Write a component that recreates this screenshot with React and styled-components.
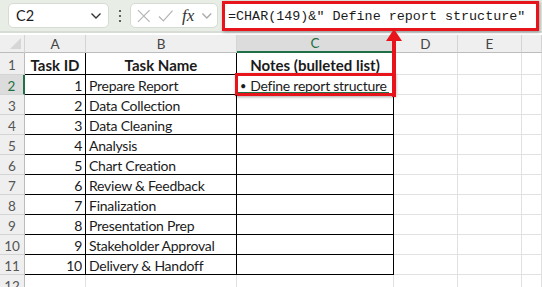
import React from "react";
import styled, { createGlobalStyle } from "styled-components";

const GlobalStyle = createGlobalStyle`
  html, body {
    margin: 0;
    padding: 0;
    background: #ffffff;
    overflow: hidden;
  }
  body {
    font-family: Lato, "Liberation Sans", sans-serif;
  }
`;

const Page = styled.div`
  position: relative;
  width: 542px;
  height: 287px;
  overflow: hidden;
  background: #ffffff;
`;

const Toolbar = styled.div`
  height: 33px;
  box-sizing: border-box;
  background: #e8eee6;
  border-bottom: 2px solid #d8dcd7;
  display: flex;
  align-items: flex-start;
  padding: 3px 0 0 8px;
`;

const NameBox = styled.div`
  width: 101px;
  height: 25px;
  box-sizing: border-box;
  background: #ffffff;
  border: 1px solid #d6dbd4;
  border-radius: 5px;
  display: flex;
  align-items: center;
  justify-content: space-between;
  padding: 0 6px 0 7px;
  font-size: 14.5px;
  color: #1b1b1b;
`;

const Dots = styled.div`
  width: 21px;
  display: flex;
  flex-direction: column;
  align-items: center;
  justify-content: center;
  gap: 3px;
  height: 25px;
  span {
    width: 2px;
    height: 2px;
    background: #333;
    border-radius: 1px;
  }
`;

const FxBox = styled.div`
  width: 88px;
  height: 25px;
  box-sizing: border-box;
  background: #ffffff;
  border: 1px solid #d6dbd4;
  border-radius: 5px;
  display: flex;
  align-items: center;
  padding: 0 4px 0 6px;
  gap: 7px;
`;

const Fx = styled.span`
  font-family: "Liberation Serif", serif;
  font-style: italic;
  font-size: 17px;
  color: #333;
  margin-left: 2px;
`;

const FormulaBox = styled.div`
  margin-left: 4px;
  margin-top: -2px;
  width: 317px;
  height: 30px;
  box-sizing: border-box;
  background: #ffffff;
  border: 3px solid #e8141b;
  box-shadow: 1px 1px 3px rgba(0, 0, 0, 0.35);
  display: flex;
  align-items: center;
  padding-left: 3px;
  font-family: "Liberation Mono", "DejaVu Sans Mono", monospace;
  font-size: 13.4px;
  color: #1b1b1b;
  white-space: pre;
`;

const Sheet = styled.div`
  display: grid;
  grid-template-columns: 25px 61px 151px 157px 64px 64px 20px;
  grid-template-rows: 18px 22px repeat(11, 20px);
  margin-top: 2px;
  color: #1b1b1b;
`;

const ColHead = styled.div`
  box-sizing: border-box;
  background: ${(p) => (p.$active ? "#dcdcdc" : "#efefef")};
  border-right: 1px solid #d4d4d4;
  border-bottom: ${(p) => (p.$active ? "2px solid #1f7145" : "1px solid #bcbcbc")};
  color: ${(p) => (p.$active ? "#1f7145" : "#444")};
  font-size: 13.5px;
  display: flex;
  align-items: center;
  justify-content: center;
`;

const Corner = styled(ColHead)`
  position: relative;
  &::after {
    content: "";
    position: absolute;
    right: 3px;
    bottom: 3px;
    border-left: 11px solid transparent;
    border-bottom: 11px solid #d6d6d6;
  }
`;

const RowHead = styled.div`
  box-sizing: border-box;
  background: ${(p) => (p.$active ? "#dcdcdc" : "#efefef")};
  border-bottom: 1px solid #d4d4d4;
  border-right: ${(p) => (p.$active ? "2px solid #1f7145" : "1px solid #bcbcbc")};
  color: ${(p) => (p.$active ? "#1f7145" : "#555")};
  font-size: 13.5px;
  display: flex;
  align-items: center;
  justify-content: center;
  padding-top: 2px;
`;

const Cell = styled.div`
  position: relative;
  box-sizing: border-box;
  border-right: 1px solid ${(p) => (p.$boxed ? "#000" : "#e1e1e1")};
  border-bottom: 1px solid ${(p) => (p.$boxed ? "#000" : "#e1e1e1")};
  display: flex;
  align-items: center;
  justify-content: ${(p) => (p.$align === "right" ? "flex-end" : p.$align === "center" ? "center" : "flex-start")};
  padding: 2px 3px 0;
  font-weight: ${(p) => (p.$bold ? 700 : 400)};
  font-size: ${(p) => (p.$bold ? "15px" : "14px")};
  letter-spacing: ${(p) => (p.$bold ? "0" : "-0.25px")};
  white-space: nowrap;
`;

const Bullet = styled.span`
  font-size: 11px;
  margin-right: 4px;
`;

const Selected = styled.div`
  position: absolute;
  left: -2px;
  top: -2px;
  right: -2px;
  bottom: -2px;
  border: 3px solid #e8141b;
  box-shadow: 1px 1px 3px rgba(0, 0, 0, 0.35);
  pointer-events: none;
  &::after {
    content: "";
    position: absolute;
    left: 0;
    right: 3px;
    bottom: 0;
    height: 1px;
    background: #1f7145;
  }
`;

const Arrow = styled.svg`
  position: absolute;
  left: 384px;
  top: 29px;
`;

const tasks = [
  "Prepare Report",
  "Data Collection",
  "Data Cleaning",
  "Analysis",
  "Chart Creation",
  "Review & Feedback",
  "Finalization",
  "Presentation Prep",
  "Stakeholder Approval",
  "Delivery & Handoff",
];

const Chevron = ({ color = "#333" }) => (
  <svg width="12" height="8" viewBox="0 0 12 8">
    <path d="M1.5 1.5 L6 6 L10.5 1.5" fill="none" stroke={color} strokeWidth="1.4" />
  </svg>
);

const App = () => {
  const rows = [];
  rows.push(
    <React.Fragment key="r1">
      <RowHead>1</RowHead>
      <Cell $boxed $bold $align="center">Task ID</Cell>
      <Cell $boxed $bold $align="center">Task Name</Cell>
      <Cell $boxed $bold $align="center">Notes (bulleted list)</Cell>
      <Cell />
      <Cell />
      <Cell />
    </React.Fragment>
  );
  tasks.forEach((t, i) => {
    const r = i + 2;
    rows.push(
      <React.Fragment key={r}>
        <RowHead $active={r === 2}>{r}</RowHead>
        <Cell $boxed $align="right">{i + 1}</Cell>
        <Cell $boxed>{t}</Cell>
        <Cell $boxed>
          {r === 2 && (
            <>
              <Bullet>•</Bullet>Define report structure
              <Selected />
            </>
          )}
        </Cell>
        <Cell />
        <Cell />
        <Cell />
      </React.Fragment>
    );
  });
  rows.push(
    <React.Fragment key="r12">
      <RowHead>12</RowHead>
      <Cell />
      <Cell />
      <Cell />
      <Cell />
      <Cell />
      <Cell />
    </React.Fragment>
  );

  return (
    <Page>
      <GlobalStyle />
      <Toolbar>
        <NameBox>
          <span>C2</span>
          <Chevron />
        </NameBox>
        <Dots>
          <span />
          <span />
          <span />
        </Dots>
        <FxBox>
          <svg width="14" height="14" viewBox="0 0 14 14">
            <path d="M1 1 L13 13 M13 1 L1 13" stroke="#b4b4b4" strokeWidth="1.2" />
          </svg>
          <svg width="16" height="14" viewBox="0 0 16 14">
            <path d="M1 7.5 L5.5 12 L15 1.5" fill="none" stroke="#b4b4b4" strokeWidth="1.2" />
          </svg>
          <Fx>fx</Fx>
          <Chevron color="#aaa" />
        </FxBox>
        <FormulaBox>{'=CHAR(149)&" Define report structure"'}</FormulaBox>
      </Toolbar>
      <Sheet>
        <Corner />
        <ColHead>A</ColHead>
        <ColHead>B</ColHead>
        <ColHead $active>C</ColHead>
        <ColHead>D</ColHead>
        <ColHead>E</ColHead>
        <ColHead />
        {rows}
      </Sheet>
      <Arrow width="20" height="70" viewBox="0 0 20 70">
        <path d="M10 0 L18 12 L12 12 L12 68 L8 68 L8 12 L2 12 Z" fill="#e8141b" />
      </Arrow>
    </Page>
  );
};

export default App;
